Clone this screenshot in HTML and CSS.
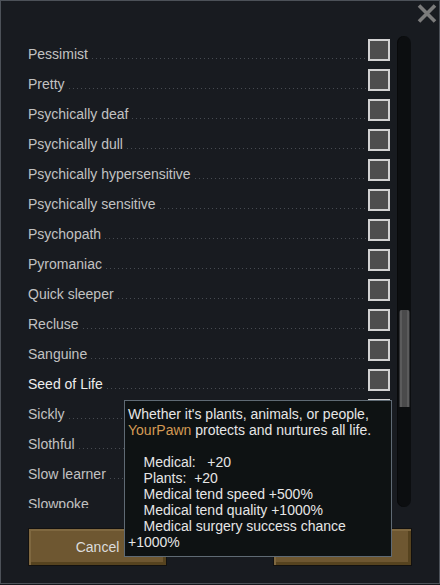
FILE: index.html
```html
<!DOCTYPE html>
<html>
<head>
<meta charset="utf-8">
<link rel="stylesheet" href="styles.css">
</head>
<body>
<div class="window">
  <button class="close" aria-label="Close">
    <svg width="20" height="19" viewBox="0 0 20 19"><path d="M2 1.5 L18 17.5 M18 1.5 L2 17.5" stroke="#7b7b7b" stroke-width="3.6" fill="none"/></svg>
  </button>
  <div class="main">
    <div class="list">
      <div class="row"><span class="label">Pessimist</span><span class="leader"></span><span class="check"></span></div>
      <div class="row"><span class="label">Pretty</span><span class="leader"></span><span class="check"></span></div>
      <div class="row"><span class="label">Psychically deaf</span><span class="leader"></span><span class="check"></span></div>
      <div class="row"><span class="label">Psychically dull</span><span class="leader"></span><span class="check"></span></div>
      <div class="row"><span class="label">Psychically hypersensitive</span><span class="leader"></span><span class="check"></span></div>
      <div class="row"><span class="label">Psychically sensitive</span><span class="leader"></span><span class="check"></span></div>
      <div class="row"><span class="label">Psychopath</span><span class="leader"></span><span class="check"></span></div>
      <div class="row"><span class="label">Pyromaniac</span><span class="leader"></span><span class="check"></span></div>
      <div class="row"><span class="label">Quick sleeper</span><span class="leader"></span><span class="check"></span></div>
      <div class="row"><span class="label">Recluse</span><span class="leader"></span><span class="check"></span></div>
      <div class="row"><span class="label">Sanguine</span><span class="leader"></span><span class="check"></span></div>
      <div class="row hover"><span class="label">Seed of Life</span><span class="leader"></span><span class="check"></span></div>
      <div class="row"><span class="label">Sickly</span><span class="leader"></span><span class="check"></span></div>
      <div class="row"><span class="label">Slothful</span><span class="leader"></span><span class="check"></span></div>
      <div class="row"><span class="label">Slow learner</span><span class="leader"></span><span class="check"></span></div>
      <div class="row"><span class="label">Slowpoke</span><span class="leader"></span><span class="check"></span></div>
    </div>
    <div class="track"><div class="thumb"></div></div>
  </div>
  <div class="buttons">
    <button class="btn">Cancel</button>
    <button class="btn">Accept</button>
  </div>
  <div class="tooltip">Whether it's plants, animals, or people, <span class="pawn">YourPawn</span> protects and nurtures all life.

    Medical:   +20
    Plants:  +20
    Medical tend speed +500%
    Medical tend quality +1000%
    Medical surgery success chance +1000%</div>
</div>
</body>
</html>
```
FILE: styles.css
```css
html, body {
  margin: 0;
  padding: 0;
  background: #14171b;
}
body {
  font-family: "Liberation Sans", Arial, sans-serif;
  font-size: 14px;
}
.window {
  position: relative;
  box-sizing: border-box;
  width: 440px;
  height: 584px;
  background: #181b20;
  border: 1px solid #4c5158;
  padding: 35px 27px 0 27px;
}
.close {
  position: absolute;
  top: 3px;
  right: 2px;
  width: 20px;
  height: 19px;
  padding: 0;
  border: 0;
  background: none;
  display: block;
}
.close svg { display: block; }
.main {
  display: flex;
  gap: 7px;
}
.list {
  width: 362px;
  height: 472px;
  overflow: hidden;
  display: flex;
  flex-direction: column;
}
.row {
  flex: 0 0 30px;
  height: 30px;
  display: flex;
  align-items: flex-start;
}
.label {
  margin-top: 10px;
  line-height: 16px;
  color: #c2c2c2;
  white-space: nowrap;
}
.hover .label { color: #ededed; }
.leader {
  flex: 1;
  height: 1px;
  margin: 22px 2px 0 4px;
  background-image: linear-gradient(to right, #474b52 1px, transparent 1px);
  background-size: 4px 1px;
  background-repeat: repeat-x;
}
.check {
  box-sizing: border-box;
  width: 22px;
  height: 22px;
  margin-top: 3px;
  border: 2px solid #d2d2d2;
  background: #4e4e4e;
}
.track {
  width: 14px;
  height: 471px;
  border-radius: 7px;
  background: #0c0e10;
  box-shadow: inset 1px 0 0 #08090a;
  display: flex;
  flex-direction: column;
  align-items: center;
}
.thumb {
  margin-top: 274px;
  width: 11px;
  height: 97px;
  border-radius: 3px 3px 0 0;
  background: linear-gradient(to right, #2e2f31 0, #2e2f31 1px, #5b5b5c 1px, #5b5b5c 3px, #4a4a4b 3px, #4a4a4b 8px, #5b5b5c 8px, #5b5b5c 10px, #2e2f31 10px);
}
.buttons {
  display: flex;
  justify-content: space-between;
  margin-top: 20px;
}
.btn {
  box-sizing: border-box;
  width: 139px;
  height: 38px;
  margin: 0;
  padding: 0;
  font-family: "Liberation Sans", Arial, sans-serif;
  font-size: 14px;
  color: #dcdcdc;
  background: #6e5731;
  border: 1px solid #121110;
  box-shadow: inset 2px 2px 0 #7f6840, inset -3px -3px 0 #56431f;
  display: flex;
  align-items: center;
  justify-content: center;
}
.tooltip {
  position: absolute;
  left: 123px;
  top: 399px;
  width: 260px;
  padding: 5px 3px 6px 3px;
  background: #0e1213;
  border: 1px solid #5f6a74;
  color: #e6e6e6;
  font-size: 14px;
  line-height: 16px;
  white-space: pre-wrap;
}
.pawn { color: #d49a54; }
```
